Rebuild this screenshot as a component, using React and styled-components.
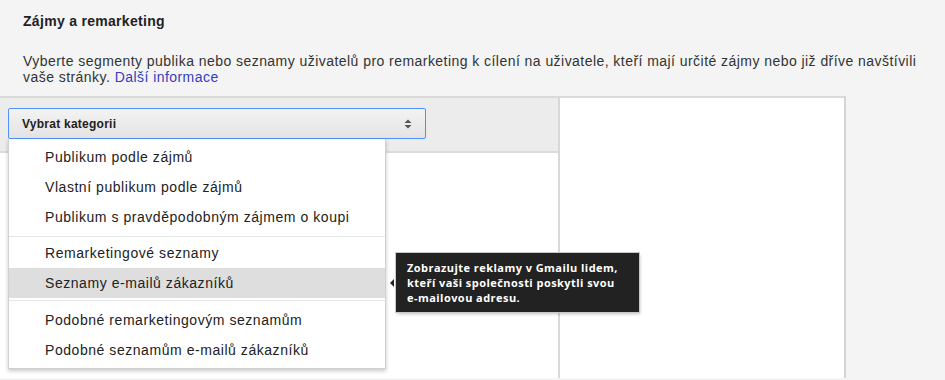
import React from "react";
import styled, { createGlobalStyle } from "styled-components";

const Global = createGlobalStyle`
  html, body { margin: 0; padding: 0; background: #f4f4f4; }
  body { font-family: "Liberation Sans", Arial, sans-serif; overflow: hidden; }
`;

const Page = styled.div`
  width: 945px;
  height: 380px;
  background: #f4f4f4;
  display: flex;
  flex-direction: column;
`;

const Intro = styled.div`
  padding: 13px 0 0 23px;
  width: 905px;
`;

const Title = styled.h2`
  margin: 0;
  font-size: 14px;
  line-height: 17px;
  font-weight: bold;
  letter-spacing: 0.3px;
  color: #222;
`;

const Desc = styled.p`
  margin: 23px 0 0;
  font-size: 14px;
  line-height: 16px;
  letter-spacing: 0.45px;
  color: #333;
`;

const MoreLink = styled.a`
  display: inline-block;
  line-height: 16px;
  color: #3340c0;
  text-decoration: none;
`;

const Panel = styled.div`
  margin-top: 11px;
  width: 844px;
  height: 280px;
  display: flex;
  border-top: 2px solid #dadada;
  border-right: 2px solid #d4d4d4;
`;

const LeftCol = styled.div`
  width: 558px;
  border-right: 2px solid #d8d8d8;
  background: #fff;
  display: flex;
  flex-direction: column;
`;

const Toolbar = styled.div`
  box-sizing: border-box;
  height: 55px;
  padding: 10px 0 0 8px;
  background: #ececec;
  border-bottom: 2px solid #dcdcdc;
`;

const SelectWrap = styled.div`
  position: relative;
  width: 418px;
`;

const SelectButton = styled.div`
  box-sizing: border-box;
  height: 31px;
  border: 1px solid #4d90fe;
  border-radius: 2px;
  background: linear-gradient(#f3f3f3, #e3e3e3);
  display: flex;
  align-items: center;
  justify-content: space-between;
  padding: 0 13px 0 13px;
  font-size: 12px;
  font-weight: bold;
  letter-spacing: 0.25px;
  color: #222;
`;

const Menu = styled.ul`
  position: absolute;
  top: 31px;
  left: 0;
  width: 378px;
  box-sizing: border-box;
  margin: 0;
  padding: 3px 0 3px;
  list-style: none;
  background: #fff;
  border: 1px solid #d0d0d0;
  border-top: none;
  box-shadow: 0 2px 4px rgba(0, 0, 0, 0.22);
  z-index: 5;
`;

const Item = styled.li`
  position: relative;
  height: 30px;
  line-height: 30px;
  padding-left: 36px;
  font-size: 14px;
  letter-spacing: 0.55px;
  color: #222;
  background: ${(p) => (p.$active ? "#dedede" : "transparent")};
`;

const Separator = styled.li`
  height: 1px;
  background: #e6e6e6;
  margin: ${(p) => p.$m || "4px 0 1px"};
`;

const Tooltip = styled.div`
  position: absolute;
  left: 387px;
  top: -15px;
  width: 243px;
  height: 59px;
  box-sizing: border-box;
  padding: 7px 0 0 11px;
  background: #222;
  color: #fff;
  font-family: "Open Sans", "Noto Sans", sans-serif;
  font-weight: 700;
  font-size: 11px;
  line-height: 15px;
  letter-spacing: 0.45px;
  box-shadow: 0 0 0 1px #c8c8c8, 1px 2px 3px rgba(0, 0, 0, 0.25);
  white-space: nowrap;

  &::before {
    content: "";
    position: absolute;
    left: -6px;
    top: 26px;
    border-style: solid;
    border-width: 4px 4px 4px 0;
    border-color: transparent #222 transparent transparent;
  }
`;

const LeftBody = styled.div`
  flex: 1;
  background: #fff;
`;

const RightCol = styled.div`
  flex: 1;
  background: #fff;
`;

const Arrows = () => (
  <svg width="8" height="10" viewBox="0 0 8 10">
    <path d="M4 0.5 L7.5 4 H0.5 Z" fill="#555" />
    <path d="M4 9.5 L7.5 6 H0.5 Z" fill="#555" />
  </svg>
);

export default function App() {
  return (
    <>
      <Global />
      <Page>
        <Intro>
          <Title>Zájmy a remarketing</Title>
          <Desc>
            Vyberte segmenty publika nebo seznamy uživatelů pro remarketing k cílení na uživatele, kteří mají určité zájmy nebo již dříve navštívili
            vaše stránky. <MoreLink href="#">Další informace</MoreLink>
          </Desc>
        </Intro>
        <Panel>
          <LeftCol>
            <Toolbar>
              <SelectWrap>
                <SelectButton>
                  <span>Vybrat kategorii</span>
                  <Arrows />
                </SelectButton>
                <Menu>
                  <Item>Publikum podle zájmů</Item>
                  <Item>Vlastní publikum podle zájmů</Item>
                  <Item>Publikum s pravděpodobným zájmem o koupi</Item>
                  <Separator />
                  <Item>Remarketingové seznamy</Item>
                  <Item $active>
                    Seznamy e-mailů zákazníků
                    <Tooltip>
                      Zobrazujte reklamy v Gmailu lidem,
                      <br />
                      kteří vaši společnosti poskytli svou
                      <br />
                      e-mailovou adresu.
                    </Tooltip>
                  </Item>
                  <Separator $m="2px 0 4px" />
                  <Item>Podobné remarketingovým seznamům</Item>
                  <Item>Podobné seznamům e-mailů zákazníků</Item>
                </Menu>
              </SelectWrap>
            </Toolbar>
            <LeftBody />
          </LeftCol>
          <RightCol />
        </Panel>
      </Page>
    </>
  );
}
